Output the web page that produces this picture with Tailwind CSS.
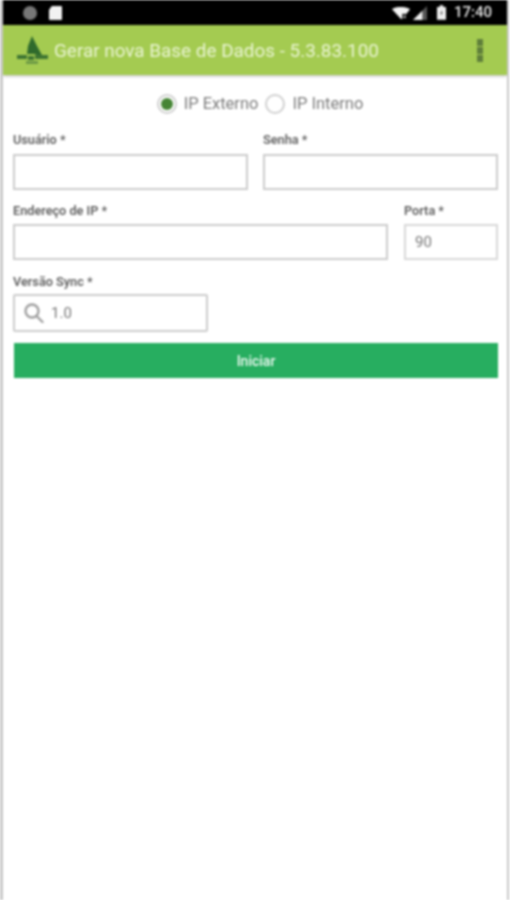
<!DOCTYPE html>
<html lang="pt-BR">
<head>
  <meta charset="UTF-8" />
  <meta name="viewport" content="width=device-width, initial-scale=1" />
  <title>Gerar nova Base de Dados</title>
  <script src="https://cdn.jsdelivr.net/npm/@tailwindcss/browser@4"></script>
</head>
<body class="bg-white font-['Roboto',sans-serif]">
  <div class="h-[900px] w-[510px] overflow-hidden pr-[1px]">
  <div class="h-[900px] w-[509px] overflow-hidden border-l-[3px] border-r-[2px] border-[#c9c9c9] blur-[0.8px]">
    <!-- Status bar -->
    <div class="flex h-[25px] items-center bg-black pl-[20px] pr-[15px]">
      <span class="h-[14px] w-[14px] rounded-full bg-[#777]"></span>
      <svg class="ml-[12px]" width="13" height="14" viewBox="0 0 14 15"><path d="M3 0h10a1 1 0 0 1 1 1v13a1 1 0 0 1-1 1H1a1 1 0 0 1-1-1V4z" fill="#f2f2f2"/></svg>
      <div class="ml-auto flex items-center">
        <svg width="18" height="12" viewBox="0 0 21 14"><path d="M0 2.500C5-1 15-1 21 2.500L12 14H10.500z" fill="#f4f4f4"/><rect x="12" y="8" width="4" height="6" fill="#000"/><rect x="13.500" y="10" width="2.500" height="3" fill="#bbb"/></svg>
        <svg class="ml-[3px]" width="14" height="14" viewBox="0 0 15 15"><path d="M15 0v15H0z" fill="#555"/><path d="M10 5v10H0z" fill="#f0f0f0"/></svg>
        <svg class="ml-[10px]" width="9" height="15" viewBox="0 0 10 16"><path d="M3 0h4v2h3v14H0V2h3z" fill="#eee"/><path d="M6 5 3.500 9H5l-1 3 2.500-4H5z" fill="#333"/></svg>
        <span class="ml-[8px] text-[15px] font-medium leading-none text-[#e6e6e6]">17:40</span>
      </div>
    </div>

    <!-- App bar -->
    <div class="flex h-[50px] items-center bg-[#a4cb51] pl-[13px] pr-[24px] shadow-[0_1px_3px_rgba(0,0,0,0.3)]">
      <svg class="h-[34px] w-[34px] shrink-0" viewBox="0 0 34 34">
        <path d="M16 3 21 13 27 24 18 21 11 21 12 13z" fill="#2f6a2c"/>
        <path d="M1 22h10v4H1zM12 23h6v4h-6zM19 22h13v4H19z" fill="#3f7532"/>
        <rect x="10" y="28" width="12" height="3" fill="#6d9a45"/>
      </svg>
      <h1 class="ml-[4px] whitespace-nowrap pt-[3px] text-[18.9px] leading-none text-[#e9f4d2]">Gerar nova Base de Dados - 5.3.83.100</h1>
      <div class="ml-auto flex flex-col gap-[1px]">
        <span class="h-[7px] w-[6px] bg-[#5f7f3a]"></span>
        <span class="h-[7px] w-[6px] bg-[#5f7f3a]"></span>
        <span class="h-[7px] w-[6px] bg-[#5f7f3a]"></span>
      </div>
    </div>

    <!-- Form -->
    <div class="pl-[10px] pr-[9px]">
      <div class="flex h-[54px] items-center justify-center pl-[9px] pt-[4px] text-[16.5px] text-[#7c7c7c]">
        <span class="flex h-[20px] w-[20px] items-center justify-center rounded-full border-2 border-[#d0d0d0]">
          <span class="h-[12px] w-[12px] rounded-full bg-[#468535]"></span>
        </span>
        <span class="ml-[7px]">IP Externo</span>
        <span class="ml-[7px] h-[20px] w-[20px] rounded-full border-2 border-[#d0d0d0]"></span>
        <span class="ml-[7px]">IP Interno</span>
      </div>

      <div class="flex gap-[15px]">
        <label class="w-[235px]">
          <span class="block h-[25px] pt-[4px] text-[12.7px] font-semibold leading-[14px] text-[#606060]">Usuário *</span>
          <input class="block h-[36px] w-full border-2 border-[#cccccc] bg-white" />
        </label>
        <label class="w-[235px]">
          <span class="block h-[25px] pt-[4px] text-[12.7px] font-semibold leading-[14px] text-[#606060]">Senha *</span>
          <input class="block h-[36px] w-full border-2 border-[#cccccc] bg-white" />
        </label>
      </div>

      <div class="mt-[9px] flex gap-[16px]">
        <label class="w-[375px]">
          <span class="block h-[25px] pt-[5px] text-[12.7px] font-semibold leading-[14px] text-[#606060]">Endereço de IP *</span>
          <input class="block h-[36px] w-full border-2 border-[#cccccc] bg-white" />
        </label>
        <label class="w-[94px]">
          <span class="block h-[25px] pt-[5px] text-[12.7px] font-semibold leading-[14px] text-[#606060]">Porta *</span>
          <input value="90" class="block h-[36px] w-full border-2 border-[#d8d8d8] bg-white pl-[9px] text-[15px] text-[#777777]" />
        </label>
      </div>

      <div class="mt-[9px]">
        <span class="block h-[25px] pt-[6px] text-[12.7px] font-semibold leading-[14px] text-[#606060]">Versão Sync *</span>
        <div class="flex h-[38px] w-[195px] items-center rounded-[2px] border-2 border-[#cccccc] pl-[9px]">
          <svg width="20" height="20" viewBox="0 0 20 20" fill="none" stroke="#a0a0a0" stroke-width="2.400"><circle cx="8" cy="8" r="6.500"/><path d="m12.500 13 6 6" stroke-linecap="round"/></svg>
          <span class="ml-[7px] pt-[1px] text-[15px] text-[#777777]">1.0</span>
        </div>
      </div>

      <button class="mt-[11px] ml-[1px] block h-[35px] w-[484px] bg-[#27ae60] pt-[2px] text-[14px] font-medium text-[#eef9f2]">Iniciar</button>
    </div>
  </div>
  </div>
</body>
</html>
